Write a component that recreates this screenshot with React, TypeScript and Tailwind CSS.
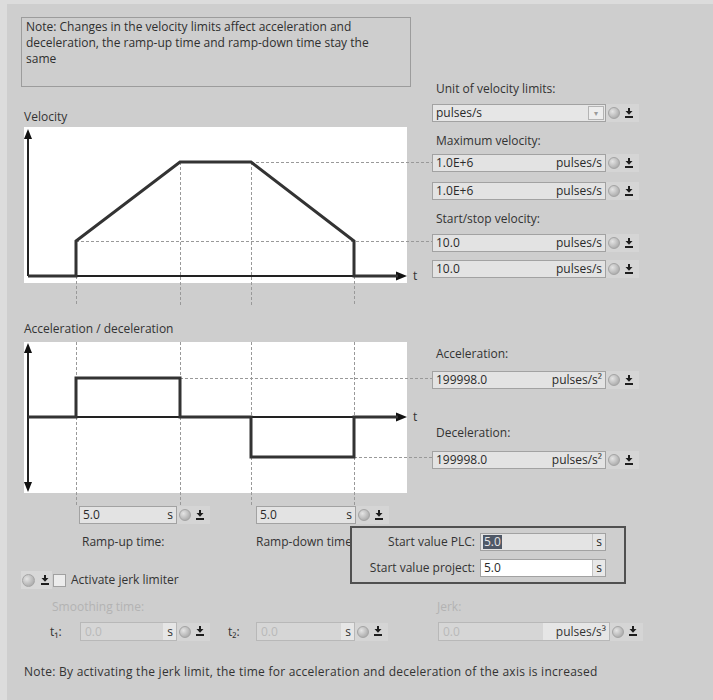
import React from "react";

const font = { fontFamily: '"Open Sans", "Liberation Sans", Arial, sans-serif' };

function DownIcon() {
    return (
        <svg width="8" height="11" viewBox="0 0 8 11">
            <rect x="3" y="0" width="2" height="3" fill="#1e1e1e" />
            <path d="M0.5 3h7L4 6.8z" fill="#1e1e1e" />
            <rect x="0" y="8" width="8" height="2" fill="#1e1e1e" />
        </svg>
    );
}

function StatusIcons({ big }: { big?: boolean }) {
    return (
        <div className="flex items-center gap-[5px] h-[18px] pl-[2px] pr-[6px] bg-[#d5d5d5]">
            <span
                className={
                    (big ? "w-[13px] h-[13px]" : "w-[12px] h-[12px]") +
                    " rounded-full border border-[#a4a4a4] bg-[radial-gradient(circle_at_35%_35%,#e4e4e4,#9c9c9c)]"
                }
            />
            <DownIcon />
        </div>
    );
}

function Field({ value, unit, w, white }: { value: string; unit: string; w: string; white?: boolean }) {
    return (
        <div
            className={
                w +
                " h-[18px] flex items-center justify-between border border-[#a2a2a2] px-[3px] text-[12px] leading-[14px] text-[#2a2a2a] " +
                (white ? "bg-white" : "bg-[#e3e3e3]")
            }
        >
            <span>{value}</span>
            <span>{unit}</span>
        </div>
    );
}

function Row({ value, unit }: { value: string; unit: string }) {
    return (
        <div className="flex items-center">
            <Field value={value} unit={unit} w="w-[174px]" />
            <StatusIcons />
        </div>
    );
}

function DisabledField({ unit, w, unitW }: { unit: string; w: string; unitW: string }) {
    return (
        <div className={w + " h-[19px] flex items-stretch border border-[#b8b8b8] bg-[#d6d6d6] text-[12px] leading-[14px]"}>
            <span className="flex-1 pl-[4px] flex items-center text-[#b9b9b9]">0.0</span>
            <span className={unitW + " flex items-center justify-end pr-[3px] bg-[#e6e6e6] text-[#333]"}>{unit}</span>
        </div>
    );
}

function Label({ children, className }: { children: React.ReactNode; className?: string }) {
    return <div className={"text-[12px] leading-[14px] text-[#333] " + (className ?? "")}>{children}</div>;
}

function VelocityChart() {
    const dash = { stroke: "#999", strokeWidth: 1, strokeDasharray: "3 2" };
    return (
        <svg width="408" height="179" className="block">
            <rect x="0" y="0" width="383" height="156" fill="#fff" />
            <line x1="52.5" y1="114" x2="52.5" y2="179" {...dash} />
            <line x1="156.5" y1="35" x2="156.5" y2="179" {...dash} />
            <line x1="227.5" y1="35" x2="227.5" y2="179" {...dash} />
            <line x1="330.5" y1="114" x2="330.5" y2="179" {...dash} />
            <line x1="227" y1="35.5" x2="408" y2="35.5" {...dash} />
            <line x1="52" y1="114.5" x2="408" y2="114.5" {...dash} />
            <line x1="4" y1="10" x2="4" y2="149" stroke="#222" strokeWidth="2" />
            <polygon points="4,2 0,12 8,12" fill="#111" />
            <line x1="4" y1="149" x2="374" y2="149" stroke="#222" strokeWidth="2" />
            <polygon points="383,149 372,144.5 372,153.5" fill="#111" />
            <polyline
                points="4,149 52,149 52,114 156,35 227,35 330,114 330,149 374,149"
                fill="none"
                stroke="#333"
                strokeWidth="3"
            />
            <text x="389" y="153" fontSize="12" fill="#333">t</text>
        </svg>
    );
}

function AccelChart() {
    const dash = { stroke: "#999", strokeWidth: 1, strokeDasharray: "3 2" };
    return (
        <svg width="408" height="165" className="block">
            <rect x="0" y="0" width="383" height="151" fill="#fff" />
            <line x1="52.5" y1="0" x2="52.5" y2="165" {...dash} />
            <line x1="156.5" y1="0" x2="156.5" y2="165" {...dash} />
            <line x1="227.5" y1="0" x2="227.5" y2="165" {...dash} />
            <line x1="330.5" y1="0" x2="330.5" y2="165" {...dash} />
            <line x1="156" y1="36.5" x2="408" y2="36.5" {...dash} />
            <line x1="330" y1="115.5" x2="408" y2="115.5" {...dash} />
            <line x1="4" y1="9" x2="4" y2="142" stroke="#222" strokeWidth="2" />
            <polygon points="4,1 0,11 8,11" fill="#111" />
            <polygon points="4,150 0,140 8,140" fill="#111" />
            <line x1="4" y1="75" x2="374" y2="75" stroke="#222" strokeWidth="2" />
            <polygon points="383,75 372,70.5 372,79.5" fill="#111" />
            <polyline
                points="4,75 52,75 52,36 156,36 156,75 227,75 227,115 330,115 330,75 374,75"
                fill="none"
                stroke="#333"
                strokeWidth="3"
            />
            <text x="389" y="79" fontSize="12" fill="#333">t</text>
        </svg>
    );
}

export default function App() {
    return (
        <div className="relative w-[713px] h-[700px] bg-[#dcdcdc] pt-1 pl-[7px] overflow-hidden" style={font}>
            <div className="h-full bg-[#cecece] flex flex-col">
                <div className="flex">
                    {/* left: note + charts */}
                    <div className="ml-[14px] w-[411px] flex flex-col">
                        <div className="mt-[13px] w-[390px] h-[70px] border border-[#9c9c9c] px-[4px] pt-[1px] text-[12px] leading-[16px] text-[#2f2f2f]">
                            Note: Changes in the velocity limits affect acceleration and
                            <br />
                            deceleration, the ramp-up time and ramp-down time stay the
                            <br />
                            same
                        </div>
                        <Label className="mt-[23px] ml-[3px]">Velocity</Label>
                        <div className="mt-[3px] ml-[3px]">
                            <VelocityChart />
                        </div>
                        <Label className="mt-[16px] ml-[3px]">Acceleration / deceleration</Label>
                        <div className="mt-[6px] ml-[3px]">
                            <AccelChart />
                        </div>
                        <div className="flex items-center ml-[58px] -mt-px">
                            <Field value="5.0" unit="s" w="w-[98px]" />
                            <StatusIcons />
                            <div className="ml-[46px]">
                                <Field value="5.0" unit="s" w="w-[100px]" />
                            </div>
                            <StatusIcons />
                        </div>
                        <div className="flex mt-[11px] ml-[61px]">
                            <Label className="w-[174px]">Ramp-up time:</Label>
                            <Label>Ramp-down time:</Label>
                        </div>
                    </div>

                    {/* right: limits */}
                    <div className="flex flex-col">
                        <Label className="mt-[78px] ml-[4px]">Unit of velocity limits:</Label>
                        <div className="flex items-center mt-[8px]">
                            <div className="w-[174px] h-[18px] flex items-stretch border border-[#a2a2a2] bg-[#e6e6e6] text-[12px] leading-[14px] text-[#2a2a2a]">
                                <span className="flex-1 pl-[3px] flex items-center">pulses/s</span>
                                <span className="w-[16px] my-[1px] mr-[1px] border border-[#b4b4b4] bg-[#ededed] flex items-center justify-center text-[8px] text-[#999]">
                                    ▾
                                </span>
                            </div>
                            <StatusIcons />
                        </div>
                        <Label className="mt-[12px] ml-[4px]">Maximum velocity:</Label>
                        <div className="mt-[6px]">
                            <Row value="1.0E+6" unit="pulses/s" />
                        </div>
                        <div className="mt-[10px]">
                            <Row value="1.0E+6" unit="pulses/s" />
                        </div>
                        <Label className="mt-[12px] ml-[4px]">Start/stop velocity:</Label>
                        <div className="mt-[8px]">
                            <Row value="10.0" unit="pulses/s" />
                        </div>
                        <div className="mt-[8px]">
                            <Row value="10.0" unit="pulses/s" />
                        </div>
                        <Label className="mt-[69px] ml-[4px]">Acceleration:</Label>
                        <div className="mt-[10px]">
                            <Row value="199998.0" unit="pulses/s²" />
                        </div>
                        <Label className="mt-[37px] ml-[4px]">Deceleration:</Label>
                        <div className="mt-[11px]">
                            <Row value="199998.0" unit="pulses/s²" />
                        </div>
                    </div>
                </div>

                {/* jerk limiter */}
                <div className="flex items-center mt-[22px] ml-[14px]">
                    <div className="flex items-center gap-[6px] h-[18px] pl-[1px] pr-[3px] bg-[#d8d8d8]">
                        <span className="w-[13px] h-[13px] rounded-full border border-[#a4a4a4] bg-[radial-gradient(circle_at_35%_35%,#e4e4e4,#9c9c9c)]" />
                        <DownIcon />
                    </div>
                    <span className="w-[13px] h-[13px] ml-[1px] border border-[#a0a0a0] bg-[#ececec]" />
                    <Label className="ml-[5px]">Activate jerk limiter</Label>
                </div>
                <div className="flex mt-[11px] ml-[45px] text-[#b3b3b3]">
                    <div className="w-[385px] text-[12px] leading-[14px]">Smoothing time:</div>
                    <div className="text-[12px] leading-[14px]">Jerk:</div>
                </div>
                <div className="flex items-center mt-[8px] ml-[43px]">
                    <Label className="w-[30px]">t₁:</Label>
                    <DisabledField unit="s" w="w-[97px]" unitW="w-[13px]" />
                    <StatusIcons />
                    <Label className="ml-[18px] w-[28px]">t₂:</Label>
                    <DisabledField unit="s" w="w-[99px]" unitW="w-[13px]" />
                    <StatusIcons />
                    <div className="ml-[50px]">
                        <DisabledField unit="pulses/s³" w="w-[172px]" unitW="w-[66px]" />
                    </div>
                    <StatusIcons />
                </div>
                <Label className="mt-[24px] ml-[17px] tracking-[0.25px]">
                    Note: By activating the jerk limit, the time for acceleration and deceleration of the axis is increased
                </Label>
            </div>

            {/* start value popup */}
            <div className="absolute left-[350px] top-[526px] w-[276px] h-[58px] border-2 border-[#505050] bg-[#cecece] flex flex-col justify-center gap-[8px]">
                <div className="flex items-center">
                    <Label className="w-[123px] text-right">Start value PLC:</Label>
                    <div className="ml-[5px] w-[126px] h-[18px] flex items-stretch border border-[#a2a2a2] bg-[#e4e4e4] text-[12px] leading-[14px] text-[#2a2a2a]">
                        <span className="flex-1 pl-[2px] flex items-center">
                            <span className="bg-[#4f5866] text-[#e6e6e6] px-[1px]">5.0</span>
                        </span>
                        <span className="w-[13px] border-l border-[#c4c4c4] flex items-center justify-center">s</span>
                    </div>
                </div>
                <div className="flex items-center">
                    <Label className="w-[123px] text-right">Start value project:</Label>
                    <div className="ml-[5px] w-[126px] h-[18px] flex items-stretch border border-[#a2a2a2] bg-white text-[12px] leading-[14px] text-[#2a2a2a]">
                        <span className="flex-1 pl-[3px] flex items-center">5.0</span>
                        <span className="w-[13px] border-l border-[#c4c4c4] bg-[#e8e8e8] flex items-center justify-center">s</span>
                    </div>
                </div>
            </div>
        </div>
    );
}
